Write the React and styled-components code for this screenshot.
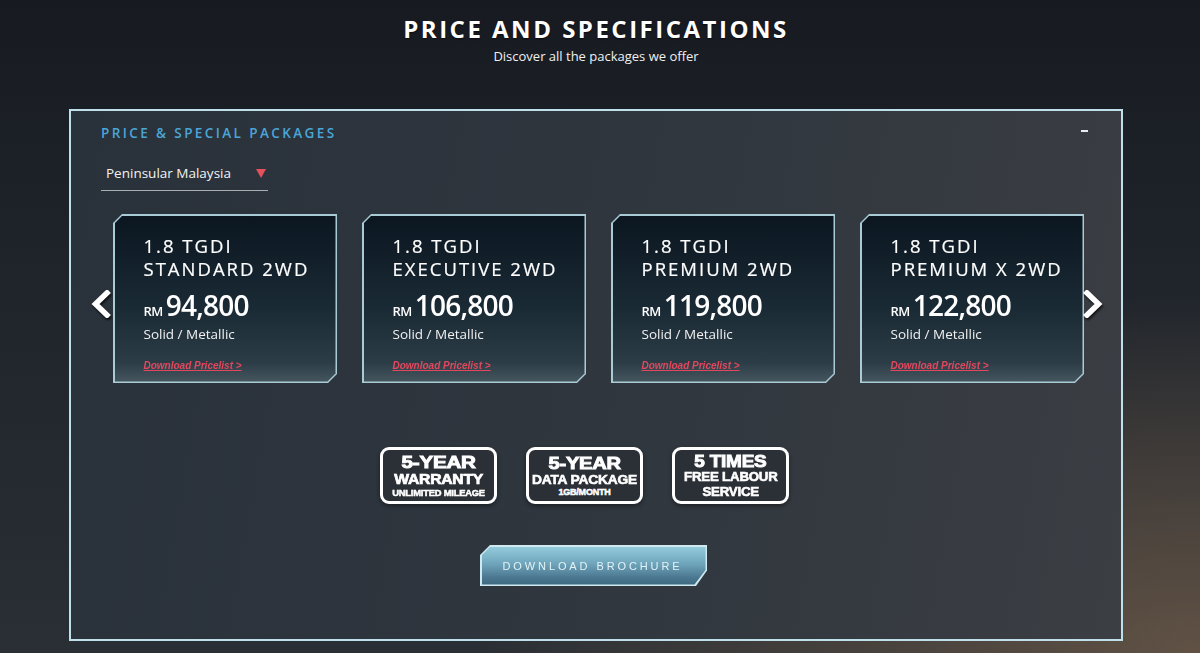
import React from "react";
import styled, { createGlobalStyle } from "styled-components";

const GlobalStyle = createGlobalStyle`
  html, body {
    margin: 0;
    padding: 0;
  }
  body {
    font-family: "Open Sans", "Liberation Sans", sans-serif;
    background: #1b1f26;
  }
`;

const Page = styled.div`
  box-sizing: border-box;
  width: 100%;
  min-height: 653px;
  padding-top: 13px;
  background:
    radial-gradient(ellipse 60% 55% at 100% 100%, rgba(110, 90, 72, 0.8), rgba(110, 90, 72, 0) 100%),
    linear-gradient(180deg, #171a21 0%, #20252c 45%, #2a2f35 100%);
  overflow: hidden;
`;

const Header = styled.header`
  text-align: center;
  color: #ffffff;
  padding-right: 8px;
`;

const Title = styled.h1`
  margin: 0;
  font-size: 24px;
  line-height: 32px;
  font-weight: 700;
  letter-spacing: 2.5px;
  text-shadow: 0 1px 2px rgba(0, 0, 0, 0.6);
`;

const Subtitle = styled.p`
  margin: 2px 0 0;
  font-size: 13px;
  line-height: 18px;
  color: #f0f0f0;
`;

const Panel = styled.section`
  box-sizing: border-box;
  margin: 44px 77px 0 69px;
  height: 532px;
  border: 2px solid #bfe0ea;
  background: linear-gradient(100deg, #29313a 0%, #2f363e 50%, #3b3e43 100%);
  padding-top: 12px;
`;

const PanelHead = styled.div`
  display: flex;
  justify-content: space-between;
  align-items: center;
  padding: 0 33px 0 30px;
`;

const PanelLabel = styled.h2`
  margin: 0;
  font-size: 13.5px;
  line-height: 20px;
  font-weight: 600;
  letter-spacing: 2.4px;
  color: #4aa6d8;
`;

const Collapse = styled.span`
  display: block;
  width: 7px;
  height: 2px;
  background: #e8eef2;
  margin-top: -4px;
`;

const Select = styled.div`
  box-sizing: border-box;
  display: flex;
  justify-content: space-between;
  align-items: center;
  width: 167px;
  margin: 21px 0 0 30px;
  padding: 0 2px 8px 5px;
  border-bottom: 1px solid #a9aeb2;
  font-size: 13.5px;
  line-height: 18px;
  color: #f2f2f2;
`;

const Caret = styled.span`
  width: 0;
  height: 0;
  border-left: 5px solid transparent;
  border-right: 5px solid transparent;
  border-top: 9px solid #e5505e;
`;

const Carousel = styled.div`
  display: flex;
  align-items: center;
  margin: 23px 0 0 19px;
`;

const Arrow = styled.div`
  width: 23px;
  height: 28px;
  margin-top: 10px;
  margin-left: ${({ $right }) => ($right ? "-4px" : "0")};
  display: flex;
  align-items: center;
  justify-content: center;
  filter: drop-shadow(1px 2px 1px rgba(0, 0, 0, 0.7));
`;

const Cards = styled.div`
  display: flex;
  gap: 25px;
`;

const CardFrame = styled.div`
  width: 224px;
  height: 169px;
  padding: 1.5px;
  box-sizing: border-box;
  background: #a9cbd6;
  clip-path: polygon(9px 0, 100% 0, 100% calc(100% - 9px), calc(100% - 9px) 100%, 0 100%, 0 9px);
  filter: drop-shadow(0 2px 3px rgba(0, 0, 0, 0.5));
`;

const CardBody = styled.div`
  box-sizing: border-box;
  height: 100%;
  padding: 18px 0 0 29px;
  background: linear-gradient(180deg, #0b1620 0%, #1a2a35 55%, #2c3c46 88%, #46565f 100%);
  clip-path: polygon(8px 0, 100% 0, 100% calc(100% - 8px), calc(100% - 8px) 100%, 0 100%, 0 8px);
  color: #ffffff;
`;

const CardTitle = styled.h3`
  margin: 0;
  font-size: 18.5px;
  line-height: 23px;
  font-weight: 500;
  letter-spacing: 2px;
  -webkit-text-stroke: 0.2px #ffffff;
`;

const Price = styled.div`
  display: flex;
  align-items: baseline;
  margin-top: 9px;
  font-size: 28px;
  line-height: 32px;
  font-weight: 600;
  letter-spacing: -0.8px;
`;

const Currency = styled.span`
  font-size: 13px;
  font-weight: 600;
  letter-spacing: -0.5px;
  margin-right: 3px;
`;

const Finish = styled.div`
  margin-top: -2px;
  font-size: 13.5px;
  line-height: 18px;
  color: #f0f0f0;
`;

const Pricelist = styled.a`
  display: inline-block;
  margin-top: 17px;
  font-family: "Liberation Sans", Arial, sans-serif;
  font-size: 10px;
  font-style: italic;
  font-weight: 700;
  color: #e2475d;
  text-decoration: underline;
`;

const Badges = styled.div`
  display: flex;
  justify-content: center;
  gap: 29px;
  margin-top: 64px;
  padding-right: 23px;
`;

const Badge = styled.div`
  box-sizing: border-box;
  width: 117px;
  height: 57px;
  border: 3px solid #ffffff;
  border-radius: 9px;
  background: #2b3036;
  display: flex;
  flex-direction: column;
  align-items: center;
  justify-content: center;
  font-family: "Liberation Sans", Arial, sans-serif;
  font-weight: 700;
  color: #ffffff;
  text-align: center;
  box-shadow: 0 2px 4px rgba(0, 0, 0, 0.4);
`;

const BadgeLine = styled.span`
  display: block;
  white-space: nowrap;
  font-size: ${({ $size }) => $size}px;
  line-height: 1.12;
  letter-spacing: -0.2px;
  -webkit-text-stroke: ${({ $stroke }) => $stroke || 0.5}px #ffffff;
  transform: scaleX(${({ $squeeze }) => $squeeze || 1});
`;

const ButtonRow = styled.div`
  display: flex;
  justify-content: center;
  margin-top: 41px;
  padding-right: 5px;
`;

const ButtonFrame = styled.div`
  width: 227px;
  height: 41px;
  padding: 1.5px;
  box-sizing: border-box;
  background: #cfe9f1;
  clip-path: polygon(10px 0, 100% 0, 100% 62%, calc(100% - 11px) 100%, 0 100%, 0 10px);
  filter: drop-shadow(3px 4px 3px rgba(0, 0, 0, 0.6));
`;

const Button = styled.button`
  box-sizing: border-box;
  width: 100%;
  height: 100%;
  border: 0;
  padding: 0 4px 0 2px;
  background: linear-gradient(180deg, #93cbdc 0%, #6ea4ba 45%, #4b7890 80%, #3d6880 100%);
  clip-path: polygon(9px 0, 100% 0, 100% 62%, calc(100% - 11px) 100%, 0 100%, 0 9px);
  font-family: "Liberation Sans", Arial, sans-serif;
  font-size: 11px;
  letter-spacing: 2.9px;
  color: #e2f2f7;
  cursor: pointer;
`;

const Chevron = ({ flip }) => (
  <svg width="22" height="28" viewBox="0 0 22 28" style={flip ? { transform: "scaleX(-1)" } : undefined}>
    <path d="M18 1 L4.5 14 L18 27" fill="none" stroke="#ffffff" strokeWidth="5.5" strokeLinejoin="miter" />
  </svg>
);

const packages = [
  { name: "STANDARD 2WD", price: "94,800" },
  { name: "EXECUTIVE 2WD", price: "106,800" },
  { name: "PREMIUM 2WD", price: "119,800" },
  { name: "PREMIUM X 2WD", price: "122,800" },
];

const PackageCard = ({ name, price }) => (
  <CardFrame>
    <CardBody>
      <CardTitle>
        1.8 TGDI
        <br />
        {name}
      </CardTitle>
      <Price>
        <Currency>RM</Currency>
        {price}
      </Price>
      <Finish>Solid / Metallic</Finish>
      <Pricelist href="#">Download Pricelist &gt;</Pricelist>
    </CardBody>
  </CardFrame>
);

const App = () => (
  <Page>
    <GlobalStyle />
    <Header>
      <Title>PRICE AND SPECIFICATIONS</Title>
      <Subtitle>Discover all the packages we offer</Subtitle>
    </Header>

    <Panel>
      <PanelHead>
        <PanelLabel>PRICE &amp; SPECIAL PACKAGES</PanelLabel>
        <Collapse />
      </PanelHead>

      <Select>
        Peninsular Malaysia
        <Caret />
      </Select>

      <Carousel>
        <Arrow>
          <Chevron />
        </Arrow>
        <Cards>
          {packages.map((p) => (
            <PackageCard key={p.name} {...p} />
          ))}
        </Cards>
        <Arrow $right>
          <Chevron flip />
        </Arrow>
      </Carousel>

      <Badges>
        <Badge>
          <BadgeLine $size={16.5} $squeeze={1.25} $stroke={0.9}>5-YEAR</BadgeLine>
          <BadgeLine $size={14} $squeeze={1.12} $stroke={0.7}>WARRANTY</BadgeLine>
          <BadgeLine $size={9} $squeeze={1.04}>UNLIMITED MILEAGE</BadgeLine>
        </Badge>
        <Badge>
          <BadgeLine $size={16.5} $squeeze={1.22} $stroke={0.9}>5-YEAR</BadgeLine>
          <BadgeLine $size={13.5} $squeeze={1.02} $stroke={0.6}>DATA PACKAGE</BadgeLine>
          <BadgeLine $size={9}>1GB/MONTH</BadgeLine>
        </Badge>
        <Badge>
          <BadgeLine $size={16.5} $squeeze={1.15} $stroke={0.9}>5 TIMES</BadgeLine>
          <BadgeLine $size={13} $squeeze={1.02} $stroke={0.6}>FREE LABOUR</BadgeLine>
          <BadgeLine $size={13} $squeeze={1.02} $stroke={0.6}>SERVICE</BadgeLine>
        </Badge>
      </Badges>

      <ButtonRow>
        <ButtonFrame>
          <Button>DOWNLOAD BROCHURE</Button>
        </ButtonFrame>
      </ButtonRow>
    </Panel>
  </Page>
);

export default App;
